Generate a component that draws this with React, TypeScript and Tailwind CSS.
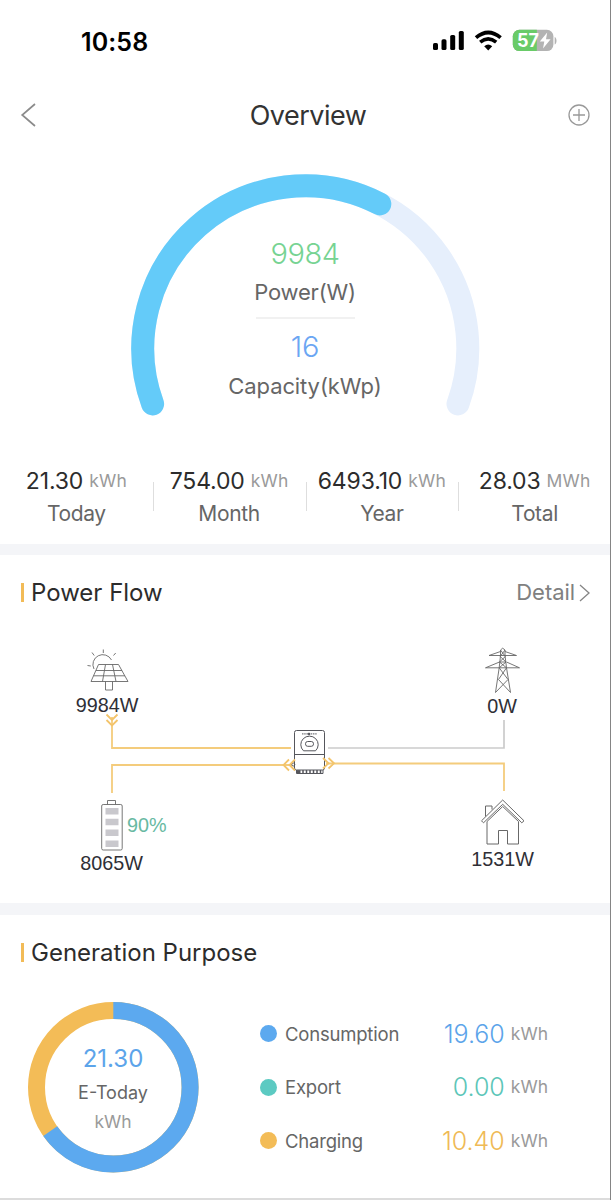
import React from "react";

const stats = [
  { value: "21.30", unit: "kWh", label: "Today" },
  { value: "754.00", unit: "kWh", label: "Month" },
  { value: "6493.10", unit: "kWh", label: "Year" },
  { value: "28.03", unit: "MWh", label: "Total" },
];

const purposes = [
  { label: "Consumption", value: "19.60", dot: "bg-[#5ca9ef]", text: "text-[#5ca4ea]" },
  { label: "Export", value: "0.00", dot: "bg-[#5ccac2]", text: "text-[#5cc6b8]" },
  { label: "Charging", value: "10.40", dot: "bg-[#f3bc57]", text: "text-[#efba56]" },
];

function StatusBar() {
  return (
    <div className="flex h-[82px] items-center justify-between pr-[53px] pl-[81px]">
      <span className="mt-[2px] text-[25px] leading-none font-semibold tracking-[0.1px] text-black">10:58</span>
      <svg width="125" height="26" viewBox="432 28 125 26" fill="none">
        <g fill="#000">
          <rect x="433" y="43" width="5" height="7" rx="1.6" />
          <rect x="441.5" y="39.3" width="5" height="10.7" rx="1.6" />
          <rect x="450.2" y="35" width="5" height="15" rx="1.6" />
          <rect x="458.8" y="31" width="5" height="19" rx="1.6" />
          <path d="M488.2 50.4 484.2 46.3Q488.2 42.600 492.2 46.3Z" />
        </g>
        <path d="M476 37.6Q488.2 27.4 500.6 37.6" stroke="#000" strokeWidth="3.8" />
        <path d="M480.2 42.2Q488.2 35.7 496.2 42.2" stroke="#000" strokeWidth="3.6" />
        <clipPath id="cell"><rect x="512.8" y="29.8" width="40.6" height="21.3" rx="6.5" /></clipPath>
        <g clipPath="url(#cell)">
          <rect x="512" y="29" width="42" height="23" fill="#b3b3b3" />
          <rect x="512" y="29" width="24.8" height="23" fill="#69cb68" />
        </g>
        <path d="M554.7 37c2.4 1 2.4 6.400 0 7.400Z" fill="#b3b3b3" />
        <text x="517" y="47" fontSize="18.5" fontWeight="700" fill="#fff" textLength="22" lengthAdjust="spacingAndGlyphs">57</text>
        <path d="M547.2 32.500 539.8 41.600H544.300L543 48.500 550.6 39.200H546Z" fill="#fff" />
      </svg>
    </div>
  );
}

function Header() {
  return (
    <header className="flex h-[66px] items-center justify-between pr-[20px] pl-[20px]">
      <svg width="18" height="26" viewBox="0 0 18 26" fill="none" stroke="#8b8b8b" strokeWidth="1.7">
        <path d="M15 2 2.200 13 15 24" />
      </svg>
      <h1 className="ml-[10px] text-[27px] leading-none font-[380] tracking-[-0.500px] text-[#333]">Overview</h1>
      <svg width="22" height="22" viewBox="0 0 22 22" fill="none" stroke="#999" strokeWidth="1.3">
        <circle cx="11" cy="11" r="10" />
        <path d="M5 11h12M11 5v12" />
      </svg>
    </header>
  );
}

function Gauge() {
  return (
    <div className="relative h-[312px]">
      <svg className="block" width="611" height="312" viewBox="0 148 611 312" fill="none" strokeWidth="23" strokeLinecap="round">
        <path d="M152.600 403.900A162.500 162.500 0 1 1 458 403.900" stroke="#e6effc" />
        <path d="M152.600 403.900A162.500 162.500 0 0 1 379.800 203.900" stroke="#64cbf9" />
      </svg>
      <div className="absolute inset-x-0 top-0 flex flex-col items-center pt-[89px]">
        <span className="text-[29px] leading-[34px] font-[330] tracking-[-0.500px] text-[#76d392]">9984</span>
        <span className="mt-[8px] text-[22px] leading-[26px] font-[380] tracking-[-0.200px] text-[#666]">Power(W)</span>
        <span className="mt-[12px] h-[2px] w-[99px] bg-[#f1f1f1]" />
        <span className="mt-[11px] text-[29px] leading-[34px] font-[330] tracking-[-0.300px] text-[#6ba6f3]">16</span>
        <span className="mt-[9px] text-[22px] leading-[26px] font-[380] tracking-[-0.100px] text-[#666]">Capacity(kWp)</span>
      </div>
    </div>
  );
}

function Stats() {
  return (
    <div className="grid h-[84px] w-[611px] grid-cols-4 pt-[5px]">
      {stats.map((s, i) => (
        <div key={s.label} className="flex items-start">
          <span className={i > 0 ? "mt-[17px] -mr-px h-[29px] w-px bg-[#dedede]" : "w-0"} />
          <div className="flex flex-1 flex-col items-center">
            <div className="flex items-center gap-[6px] whitespace-nowrap">
              <span className="text-[23px] leading-[32px] tracking-[-0.150px] text-[#2c2c2c]">{s.value}</span>
              <span className="text-[17.500px] leading-[32px] tracking-[0.200px] text-[#9a9a9a]">{s.unit}</span>
            </div>
            <span className="mt-[2px] text-[21px] leading-[30px] font-[380] tracking-[-0.350px] text-[#666]">{s.label}</span>
          </div>
        </div>
      ))}
    </div>
  );
}

function SectionTitle({ children }: { children: React.ReactNode }) {
  return (
    <div className="flex items-center gap-[7px]">
      <span className="h-[19px] w-[3px] bg-[#f2bb57]" />
      <h2 className="text-[24px] leading-[30px] font-[380] text-[#2c2c2c]">{children}</h2>
    </div>
  );
}

function FlowDiagram() {
  return (
    <div className="relative h-[273px]">
      <svg className="block" width="611" height="273" viewBox="0 630 611 273" fill="none">
        <g stroke="#f4cc7c" strokeWidth="1.800">
          <path d="M112 717V748H291" />
          <path d="M112 793V765H292" />
          <path d="M504 791V763.500H326" />
        </g>
        <path d="M504 720V748H328" stroke="#cbcbcb" strokeWidth="1.700" />
        <g stroke="#686868" strokeWidth="0.900">
          <path d="M98.500 664.500H118.500L128 681.500H91ZM96 670.500H122M93.500 675.800H125M105.500 664.500 102.500 681.500M112.500 664.500 116 681.500M105.500 681.500V690H112.500V681.500" />
          <path d="M94 669A9.500 9.500 0 0 1 111.500 660M103.300 649.500V653M92 652.500 94.200 655.500M115.700 653 113.500 655.500M87.500 665.500 90.800 666" />
          <path d="M500.500 651.500 489 655.500H516.500L505 651.500M499.500 662 485.500 667.800H519.500L506.500 662M500.500 655.500V650L502.700 648.200 505 650V655.500L506.500 667.800 510.500 692.500 498.500 679.500 506.500 667.800M500.500 655.500 499.200 667.800 495.500 692.500 508 679.500 499.200 667.800M500.500 650 505.300 656.500 499.500 662 506.500 667.800M505 650 500.200 656.500 506 662 499.200 667.800M499.500 662H506" />
          <path d="M481.500 820.800 502.700 800 524 820.800 521.800 822.800 502.700 804.300 483.500 822.800ZM487 821.500V844H498.500V830.500H507.500V844H518.500V821.500L502.700 806.500 487 821.500M485.500 816.500V806H492V809.500" strokeWidth="1" />
          <rect x="101.700" y="804.500" width="20.500" height="45.500" rx="1.500" />
          <path d="M107.500 804.500V800.500H115.500V804.500" />
        </g>
        <path d="M105.500 808H118.500V814.500H105.500ZM105.500 818.800H118.500V825.300H105.500ZM105.500 829.600H118.500V836.100H105.500ZM105.500 840.400H118.500V846.900H105.500Z" fill="#c9c8cd" />
        <g stroke="#55565c" strokeWidth="1">
          <rect x="294.500" y="730.500" width="30" height="39.500" rx="2" fill="#fff" />
          <path d="M294.500 754.500H324.500" />
          <path d="M302 733.900H317" strokeDasharray="1.500 0.700" />
          <path d="M303.500 750.800A8.700 8.500 0 1 1 315.500 750.800Z" />
          <rect x="305.500" y="741.500" width="8" height="4.800" rx="2.200" />
          <circle cx="309" cy="734" r="0.900" fill="#55565c" />
          <circle cx="293.300" cy="764.500" r="1.500" />
          <path d="M296.500 770V773.500H323V770" />
          <path d="M297 771.600H300.500" strokeWidth="3" />
          <path d="M303 770V773.500M306.500 770V773.500M310 770V773.500M313.500 770V773.500M317 770V773.500M320.500 770V773.500" strokeWidth="1.500" />
        </g>
        <g stroke="#f3c46b" strokeWidth="1.800">
          <path d="M106.500 714.500 112 720 117.500 714.500M106.500 720 112 725.500 117.500 720" />
          <path d="M289 759.500 283.500 765 289 770.500M295 759.500 289.500 765 295 770.500" />
          <path d="M323 758 328.500 763.300 323 768.500M328.500 758 334 763.300 328.500 768.500" />
        </g>
      </svg>
      <div className="font-['Liberation_Sans',sans-serif] text-[19.800px] leading-[24px] text-[#2f2f36]">
        <span className="absolute top-[63px] left-[107px] -translate-x-1/2">9984W</span>
        <span className="absolute top-[64px] left-[502px] -translate-x-1/2">0W</span>
        <span className="absolute top-[221px] left-[111.500px] -translate-x-1/2">8065W</span>
        <span className="absolute top-[217px] left-[502.500px] -translate-x-1/2">1531W</span>
        <span className="absolute top-[183px] left-[127px] text-[#68b9a2]">90%</span>
      </div>
    </div>
  );
}

function PowerFlow() {
  return (
    <section className="border-t-[11px] border-[#f4f5f8]">
      <div className="flex h-[75px] items-center justify-between pr-[20px] pl-[21px]">
        <SectionTitle>Power Flow</SectionTitle>
        <div className="flex items-center gap-[4px] text-[22px] leading-[30px] font-[380] tracking-[-0.050px] text-[#808080]">
          <span className="-mt-px">Detail</span>
          <svg width="11" height="18" viewBox="0 0 11 18" fill="none" stroke="#858585" strokeWidth="1.300">
            <path d="M1 1 10 9 1 17" />
          </svg>
        </div>
      </div>
      <FlowDiagram />
    </section>
  );
}

function Donut() {
  return (
    <div className="relative h-[172px] w-[172px]">
      <svg className="block" width="172" height="172" viewBox="0 0 172 172" fill="none" strokeWidth="17">
        <circle cx="86.300" cy="86.300" r="76.800" stroke="#f3bc57" />
        <circle cx="86.300" cy="86.300" r="76.800" stroke="#5ca9ef" pathLength="30" strokeDasharray="19.600 10.400" transform="rotate(-90 86.300 86.300)" />
      </svg>
      <div className="absolute inset-0 flex flex-col items-center pt-[43px]">
        <span className="text-[24px] leading-[30px] font-[380] text-[#5ca4ea]">21.30</span>
        <span className="mt-[7px] text-[18px] leading-[24px] font-[380] text-[#666]">E-Today</span>
        <span className="mt-[5px] text-[17.500px] leading-[24px] text-[#9a9a9a]">kWh</span>
      </div>
    </div>
  );
}

function GenerationPurpose() {
  return (
    <section className="h-[297px] border-t-[12px] border-b-2 border-t-[#f4f5f8] border-b-[#dcdcdc]">
      <div className="flex h-[75px] items-center pl-[21px]">
        <SectionTitle>Generation Purpose</SectionTitle>
      </div>
      <div className="flex items-start pt-[11px] pl-[27px]">
        <Donut />
        <ul className="mt-[6px] ml-[61px] w-[288px]">
          {purposes.map((p) => (
            <li key={p.label} className="flex h-[53.500px] items-center">
              <span className={`h-[17px] w-[17px] rounded-full ${p.dot}`} />
              <span className="ml-[8px] flex-1 text-[18.500px] leading-[30px] font-[380] tracking-[-0.200px] text-[#666]">{p.label}</span>
              <span className={`text-[25px] leading-[30px] font-[340] ${p.text}`}>{p.value}</span>
              <span className="ml-[6px] text-[17.500px] leading-[30px] text-[#9a9a9a]">kWh</span>
            </li>
          ))}
        </ul>
      </div>
    </section>
  );
}

export default function App() {
  return (
    <main className="h-[1200px] w-[611px] overflow-hidden border-r border-[#858585] bg-white font-['Inter',sans-serif]">
      <div className="w-[610px]">
        <StatusBar />
        <Header />
        <Gauge />
        <Stats />
        <PowerFlow />
        <GenerationPurpose />
      </div>
    </main>
  );
}
